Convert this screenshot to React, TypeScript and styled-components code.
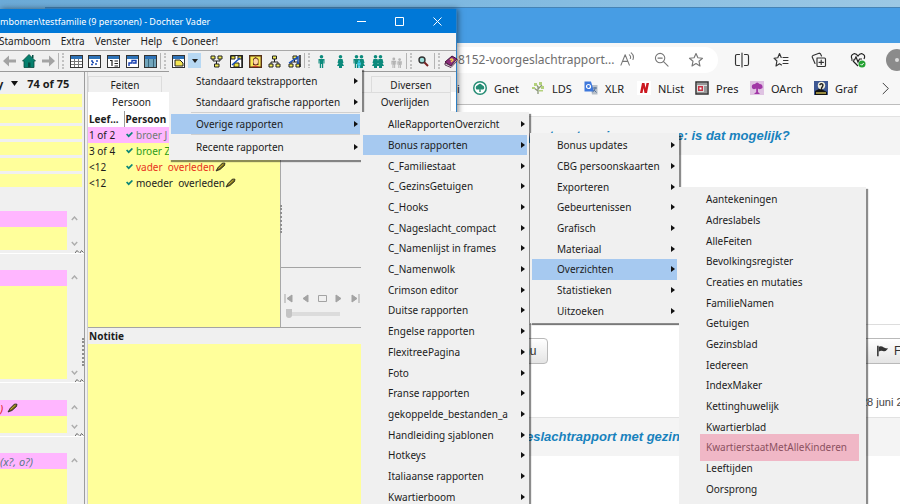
import React from "react";
import styled, { createGlobalStyle, css } from "styled-components";

const UI = `"Noto Sans", "Open Sans", sans-serif`;

const GlobalStyle = createGlobalStyle`
  *, *::before, *::after { box-sizing: border-box; }
  html, body { margin: 0; height: 100%; }
  body { overflow: hidden; font-family: ${UI}; font-size: 10px; color: #1c1c1c; }
  button, input { font: inherit; color: inherit; border: 0; padding: 0; margin: 0; background: none; }
  ul { list-style: none; margin: 0; padding: 0; }
  h2 { margin: 0; }
  a { color: inherit; text-decoration: none; }
  svg { display: block; flex: none; }
`;

const Desktop = styled.main`
  position: relative;
  height: 100vh;
  overflow: hidden;
  background: linear-gradient(90deg, #6cabd8, #7db8e0 50%, #9cc8e4);
`;

/* ---------- browser ---------- */

const Browser = styled.section`
  position: absolute;
  inset: 7px 0 0 45px;
  display: flex;
  flex-direction: column;
  background: #fff;
  border-top: 1px solid #4583b5;
`;

const TabStrip = styled.div`
  flex: none;
  height: 35px;
  background: #479de4;
`;

const BrowserBar = styled.div`
  flex: none;
  display: flex;
  align-items: center;
  height: 33px;
  background: #f7f7f7;
  padding-left: 403px;
  color: #333;
`;

const AddressBox = styled.div`
  display: flex;
  flex: none;
  align-items: center;
  width: 270px;
  height: 26px;
  padding-left: 10px;
  border-radius: 0 13px 13px 0;
  background: #fff;
`;

const AddressInput = styled.input`
  width: 158px;
  font-size: 12px;
  color: #6e6e6e;
  outline: 0;
`;

const IconButton = styled.button<{ $w?: number }>`
  display: flex;
  flex: none;
  justify-content: center;
  align-items: center;
  width: ${(p) => p.$w ?? 38}px;
  height: 26px;
`;

const Bookmarks = styled.nav`
  flex: none;
  display: flex;
  align-items: center;
  height: 29px;
  padding: 0 0 4px 412px;
  background: #f7f7f7;
  border-bottom: 1px solid #bdbdbd;
  font-size: 11px;
  color: #222;
`;

const Bookmark = styled.a<{ $w: number }>`
  display: flex;
  flex: none;
  align-items: center;
  gap: 7px;
  width: ${(p) => p.$w}px;
  white-space: nowrap;
`;

const Page = styled.div`
  flex: 1;
  display: flex;
  flex-direction: column;
  padding-top: 11px;
  font-family: "Liberation Sans", sans-serif;
`;

const PostHead = styled.header<{ $left: number }>`
  height: 39px;
  padding: 11px 0 0 ${(p) => p.$left}px;
  background: #f4f4f4;
  border-top: 1px solid #e2e2e2;
`;

const PostTitle = styled.h2`
  font: italic bold 13px/15px "Liberation Sans", sans-serif;
  color: #1882bd;
  white-space: nowrap;
`;

const PostBody = styled.div`
  height: 170px;
  border-bottom: 1px solid #ddd;
`;

const PostActions = styled.div`
  display: flex;
  justify-content: space-between;
  padding: 13px 0 0 422px;
`;

const PageButton = styled.button`
  display: flex;
  align-items: center;
  justify-content: flex-end;
  gap: 8px;
  height: 26px;
  padding: 0 11px;
  border: 1px solid #b9b9b9;
  border-radius: 4px;
  background: linear-gradient(#fff, #e4e4e4);
  font-size: 12px;
  color: #333;
  white-space: nowrap;
`;

const FlagButton = styled(PageButton)`
  justify-content: flex-start;
  gap: 5px;
  width: 41px;
  padding: 0 0 0 17px;
  border-right: 0;
  border-radius: 0;
`;

const PostDate = styled.time`
  align-self: flex-end;
  width: 39px;
  padding: 32px 0 8px;
  font-size: 11px;
  line-height: 13px;
  color: #444;
  white-space: nowrap;
`;

/* ---------- genealogy program ---------- */

const Program = styled.section`
  position: absolute;
  inset: 9px auto 0 0;
  width: 457px;
  display: flex;
  flex-direction: column;
  background: #f0f0f0;
  border-right: 1px solid #2c7fc4;
  box-shadow: 1px 0 6px rgba(0, 0, 0, 0.5);
`;

const TitleBar = styled.header`
  flex: none;
  display: flex;
  align-items: center;
  height: 24px;
  background: #0078d7;
  color: #fff;
  font-size: 9px;
  white-space: pre;
`;

const WindowButtons = styled.div`
  display: flex;
  margin-left: auto;
`;

const MenuBar = styled.nav`
  flex: none;
  display: flex;
  gap: 10px;
  height: 17px;
  margin-left: -1px;
  line-height: 17px;
  background: #f4f4f4;
`;

const BarButton = styled.button`
  white-space: nowrap;
`;

const ToolBar = styled.div`
  flex: none;
  display: flex;
  align-items: center;
  height: 22px;
  border-top: 1px solid #a8a8a8;
  border-bottom: 1px solid #9a9a9a;
`;

const ToolGroup = styled.div<{ $w: number; $inset?: number }>`
  display: flex;
  flex: none;
  justify-content: space-around;
  width: ${(p) => p.$w}px;
  padding-left: ${(p) => p.$inset ?? 0}px;
`;

const Tool = styled.button<{ $on?: boolean }>`
  display: flex;
  align-items: center;
  justify-content: center;
  width: ${(p) => (p.$on ? 13 : 16)}px;
  height: 17px;
  background: ${(p) => (p.$on ? "#b7d8f3" : "none")};
`;

const Grip = styled.span`
  flex: none;
  width: 6px;
  height: 16px;
  border-left: 1px solid #b4b4b4;
  border-right: 2px dotted #c2c2c2;
`;

const Body = styled.div`
  flex: 1;
  min-height: 0;
  display: grid;
  grid-template-columns: 85px 1fr;
`;

const SidePanel = styled.aside`
  position: relative;
  display: flex;
  flex-direction: column;
  overflow: hidden;
  border-right: 1px solid #9c9c9c;
`;

const Counter = styled.div`
  flex: none;
  display: flex;
  align-items: center;
  gap: 8px;
  height: 22px;
  margin-left: -3px;
  font-size: 11px;
  font-weight: bold;
`;

const FieldList = styled.ul`
  flex: none;
  display: flex;
  flex-direction: column;
  gap: 3px;
  padding-right: 2px;
`;

const Field = styled.li`
  height: 13px;
  background: #ffff9b;
`;

const Box = styled.div<{ $h: number; $top: number }>`
  flex: none;
  display: grid;
  grid-template-columns: 67px 1fr;
  height: ${(p) => p.$h}px;
  margin-top: ${(p) => p.$top}px;
`;

const BoxText = styled.div`
  background: #ffff9b;
`;

const BoxHead = styled.div<{ $color?: string }>`
  display: flex;
  align-items: center;
  gap: 4px;
  height: 16px;
  background: #ffb6ff;
  color: ${(p) => p.$color ?? "#222"};
  font-size: 11px;
  font-style: italic;
`;

const Scroller = styled.div`
  display: flex;
  flex-direction: column;
  justify-content: space-between;
  align-items: center;
  padding: 5px 3px 4px 0;
`;

const SashRow = styled.div`
  flex: none;
  display: flex;
  justify-content: flex-end;
  height: 4px;
  border-bottom: 1px solid #fff;
`;

const SideSash = styled.div`
  position: absolute;
  right: 0;
  top: 266px;
  height: 28px;
  border-right: 2px dotted #8e8e8e;
`;

const MainPanel = styled.div`
  display: flex;
  flex-direction: column;
  margin-left: 2px;
  border-left: 1px solid #cfcfcf;
`;

const TabRow = styled.div<{ $active?: boolean }>`
  flex: none;
  display: flex;
  justify-content: space-between;
  height: ${(p) => (p.$active ? 19 : 20)}px;
  padding: ${(p) => (p.$active ? 0 : 4)}px 5px 0 0;
  background: ${(p) => (p.$active ? "#fff" : "#f0f0f0")};
`;

const Tab = styled.button<{ $w: number; $active?: boolean }>`
  width: ${(p) => p.$w}px;
  border: 1px solid #dcdcdc;
  border-bottom: 0;
  background: ${(p) => (p.$active ? "#fff" : "#f0f0f0")};
  ${(p) => p.$active && css`border-color: #fff;`}
`;

const Upper = styled.div`
  flex: none;
  display: grid;
  grid-template-columns: 193px 1fr;
  height: 217px;
  border-bottom: 1px solid #a4a4a4;
`;

const ListPane = styled.div`
  background: #ffff9b;
  border-right: 1px solid #a8a8a8;
`;

const People = styled.table`
  width: 100%;
  border-collapse: collapse;
  table-layout: fixed;
  line-height: 16px;
  white-space: pre;
  th { background: #fff; text-align: left; font-weight: bold; padding: 0 0 0 1px; height: 16px; }
  th + th { border-left: 1px solid #999; }
  td { padding: 0 0 0 1px; height: 16px; }
`;

const PersonRow = styled.tr<{ $picked?: boolean; $color: string }>`
  background: ${(p) => (p.$picked ? "#ffb6ff" : "#ffff9b")};
  td + td { color: ${(p) => p.$color}; }
`;

const PersonName = styled.span`
  display: flex;
  align-items: center;
  padding-left: 1px;
`;

const NameText = styled.span`
  padding-left: 3px;
`;

const MediaPane = styled.div`
  display: flex;
  flex-direction: column;
`;

const MediaView = styled.div`
  position: relative;
  height: 157px;
  border-bottom: 1px solid #a4a4a4;
`;

const PaneSash = styled.div`
  position: absolute;
  left: -1px;
  bottom: 34px;
  height: 28px;
  border-left: 2px dotted #8e8e8e;
`;

const MediaButtons = styled.div`
  display: flex;
  justify-content: space-between;
  width: 76px;
  margin: 26px 0 0 3px;
`;

const Slider = styled.input`
  appearance: none;
  width: 54px;
  height: 10px;
  margin: 6px 0 0 5px;
  &::-webkit-slider-runnable-track { height: 4px; background: #dcdcdc; }
  &::-webkit-slider-thumb {
    appearance: none;
    width: 6px;
    height: 9px;
    margin-top: -3px;
    background: #c4c4c4;
    border-radius: 0 0 3px 3px;
  }
`;

const NoteLabel = styled.label`
  flex: none;
  height: 16px;
  line-height: 16px;
  padding-left: 1px;
  font-weight: bold;
`;

const Note = styled.textarea`
  flex: 1;
  display: block;
  width: 100%;
  border: 0;
  padding: 2px;
  resize: none;
  outline: 0;
  background: #ffff9b;
`;

/* ---------- popup menus ---------- */

const Popup = styled.div<{ $x: number; $y: number; $w: number }>`
  position: absolute;
  left: ${(p) => p.$x}px;
  top: ${(p) => p.$y}px;
  width: ${(p) => p.$w}px;
  padding: 2px;
  background: #f0f0f0;
  box-shadow: 2px 2px 1px rgba(0, 0, 0, 0.45);
`;

const TallPopup = styled(Popup)`
  bottom: 0;
`;

const PopupList = styled.ul<{ $h: number; $rows?: string }>`
  display: grid;
  grid-auto-rows: 1fr;
  grid-template-rows: ${(p) => p.$rows ?? "none"};
  height: ${(p) => p.$h}px;
`;

const PopupItem = styled.li<{ $marked?: boolean; $ruled?: boolean }>`
  position: relative;
  min-height: 0;
  ${(p) => p.$ruled && css`
    margin-top: 2px;
    &::before {
      content: "";
      position: absolute;
      inset: -2px 0 auto 20px;
      border-top: 1px solid #d0d0d0;
    }
  `}
  ${(p) => p.$marked && css`
    &::after {
      content: "";
      position: absolute;
      inset: -3px 5px -3px 19px;
      background: rgba(240, 125, 155, 0.5);
      pointer-events: none;
    }
  `}
`;

const PopupButton = styled.button<{ $on?: boolean }>`
  display: flex;
  align-items: center;
  justify-content: space-between;
  width: 100%;
  height: 100%;
  padding: 0 2px 0 25px;
  background: ${(p) => (p.$on ? "#a6c9f0" : "transparent")};
  white-space: nowrap;
`;

/* ---------- drawings ---------- */

const Arrow = () => (
  <svg width="4" height="6" viewBox="0 0 4 6"><path d="M0 0 4 3 0 6Z" fill="#111" /></svg>
);
const Check = () => (
  <svg width="7" height="7" viewBox="0 0 7 7"><path d="M.6 2 2.700 4.200 6.400 .5" fill="none" stroke="#0b8578" strokeWidth="1.700" /></svg>
);
const Pen = () => (
  <svg width="11" height="10" viewBox="0 0 11 10">
    <path d="M1 9 3 5.500 7.500 1 10 1.200 9.500 3.500 5 7.500Z" fill="#6e6115" stroke="#222" strokeWidth=".8" />
    <path d="M3.500 6.500 8.500 2" stroke="#cdb73c" strokeWidth="1" />
  </svg>
);
const Chevron = ({ down = false }: { down?: boolean }) => (
  <svg width="7" height="5" viewBox="0 0 7 5"><path d={down ? "M.8 1 3.500 4 6.200 1" : "M.8 4 3.500 1 6.200 4"} fill="none" stroke="#adadad" strokeWidth="1.400" /></svg>
);
const SashMark = () => (
  <svg width="9" height="3" viewBox="0 0 9 3"><path d="M0 3 2 .5 4 2.500M5 3 6.500 .5 8.500 2.500" fill="none" stroke="#666" /></svg>
);
const NavArrow = ({ flip = false }: { flip?: boolean }) => (
  <svg width="13" height="12" viewBox="0 0 13 12"><path d={flip ? "M13 6 7 .5V4.500H0V7.500H7V11.500Z" : "M0 6 6 .5V4.500H13V7.500H6V11.500Z"} fill="#a3a3a3" /></svg>
);
const Home = () => (
  <svg width="14" height="14" viewBox="0 0 14 14"><path d="M7 .5 13.500 7H12V13.500H2V7H.5Z" fill="#06806e" stroke="#064b40" strokeWidth=".8" /><path d="M6 8.500H8.500V13H6ZM10 1H11.500V4H10Z" fill="#054f43" /></svg>
);

const GridFrame = ({ children }: { children?: React.ReactNode }) => (
  <svg width="13" height="13" viewBox="0 0 13 13">
    <rect x=".5" y=".5" width="12" height="12" fill="#fff" stroke="#333" />
    <rect x="1" y="1" width="11" height="3" fill="#2e73b8" />
    {children}
  </svg>
);

const windowDrawings = [
  <path d="M1 6.500H12M1 9.500H12M4.500 4V12M8.500 4V12" stroke="#777" />,
  <path d="M3 6H5M8 6H10M4 7.500H6M7 9H9M3 9.500H5" stroke="#2452b4" strokeWidth="1.500" />,
  <path d="M3 5.500H5V11M7.500 6H11M7.500 8.500H11M7.500 11H11" fill="none" stroke="#222" strokeWidth="1.200" />,
  <path d="M3 11V8H6V5.500H10V8H7" fill="none" stroke="#153eb0" strokeWidth="1.400" />,
  <><rect x="1" y="4" width="11" height="8" fill="#72a5bb" /><path d="M4.500 4V12M9.500 4V12" stroke="#38657a" /></>,
];

const treeDrawings = [
  <><path d="M3 3V6H10V3M6.500 6V10" fill="none" stroke="#222" /><path d="M1 1H5V4H1ZM8 1H12V4H8ZM4.500 9H9V12H4.500Z" fill="#f5ef58" stroke="#222" /></>,
  <><path d="M.5 .5H12.500V12.500H.5Z" fill="#fff" stroke="#222" /><path d="M1 1H5V4H1ZM8 1H12V4H8ZM4 8H9V12H4Z" fill="#eee440" stroke="#222" /><path d="M2 10 10 3" stroke="#1750bd" strokeWidth="1.500" /><path d="M12 0V13" stroke="#222" strokeWidth="1.500" /></>,
  <><path d="M.7 .7H12.300V12.300H.7Z" fill="#f8e955" stroke="#553018" strokeWidth="1.400" /><path d="M4 10V4L6.500 2 9.500 4V10Z" fill="#5c2a18" /><ellipse cx="6.700" cy="6.500" rx="2.300" ry="3" fill="#ffd4a6" /><path d="M3 12Q6.500 8.500 10 12Z" fill="#c64634" /></>,
  <><path d="M6.500 3V7M3 10V7H10V10" fill="none" stroke="#222" /><path d="M4.500 1H8.500V4H4.500ZM1 9H5V12H1ZM8 9H12V12H8Z" fill="#f5ef58" stroke="#222" /></>,
  <><path d="M6.500 1V7M3 10V7H10V10" fill="none" stroke="#222" /><path d="M5 1H9V4H5ZM1 9H5V12H1ZM8 9H12V12H8Z" fill="#f5ef58" stroke="#222" /><path d="M1 8 10 2V9" fill="none" stroke="#1750bd" strokeWidth="1.500" /><path d="M12 0V12" stroke="#222" strokeWidth="1.500" /></>,
];

const Person = ({ x = 0, skirt = false, color = "#0c8a7c", s = 1 }: { x?: number; skirt?: boolean; color?: string; s?: number }) => (
  <g transform={`translate(${x} ${(1 - s) * 13}) scale(${s})`} fill={color}>
    <circle cx="3.500" cy="1.800" r="1.800" />
    <path d={skirt ? "M1.500 4H5.500L6.500 8H5.500L7 11H5V13H2V11H0L1.500 8H.5Z" : "M.5 4H6.500V8.500H5.500V5.500H5.200V13H3.900V9H3.100V13H1.800V5.500H1.500V8.500H.5Z"} />
  </g>
);

const peopleDrawings = [
  <svg width="7" height="13"><Person /></svg>,
  <svg width="7" height="13"><Person skirt /></svg>,
  <svg width="12" height="13"><Person /><Person x={5} skirt /><Person x={4} s={0.6} color="#3ecbea" /></svg>,
  <svg width="12" height="13"><Person skirt /><Person x={5} skirt /></svg>,
  <svg width="12" height="13"><Person s={0.8} color="#b4b4b4" /><Person x={6} s={0.75} color="#b4b4b4" /></svg>,
];

const Stroke = ({ d, w = 16, color = "#333" }: { d: string; w?: number; color?: string }) => (
  <svg width={w} height={w} viewBox="0 0 16 16"><path d={d} fill="none" stroke={color} strokeWidth="1.150" strokeLinecap="round" strokeLinejoin="round" /></svg>
);

const star = "M8 1.500 9.900 5.800 14.500 6.200 11 9.300 12 14 8 11.600 4 14 5 9.300 1.500 6.200 6.100 5.800Z";

const bookmarks = [
  { text: "Gnet", w: 58, icon: <><circle cx="7" cy="7" r="7" fill="#258c74" /><circle cx="7" cy="7" r="5.500" fill="#fff" /><path d="M3 8Q2 5 5 4 7 1.500 9 4 12 5 11 8 9 9 7.700 8.200V11H6.300V8.200Q4 9 3 8" fill="#258c74" /></> },
  { text: "LDS", w: 53, icon: <><path d="M7 13V5M7 10 3 7M7 8 11 4M7 6 5 3" stroke="#8b9878" strokeWidth="1.300" /><path d="M1 6H4V8H1ZM3 2H6V5H3ZM8 1H11V4H8ZM10 5H13V8H10ZM8 9H12V10.500H8Z" fill="#b3d17c" /></> },
  { text: "XLR", w: 53, icon: <><path d="M6 4H13.500V13.500H8Z" fill="#b8bfc8" /><path d="M.5 .5H7L10 10.500H.5Z" fill="#3e78dc" /><circle cx="4.500" cy="5.500" r="2" fill="none" stroke="#fff" strokeWidth="1.200" /><path d="M9 7H13M11 6V8Q10 10 8.500 11M10 9 12.500 11.500" stroke="#55729a" fill="none" /></> },
  { text: "NList", w: 58, icon: <><rect width="14" height="14" fill="#fff" /><path d="M3 12 5 2H7.500L8.500 7 9.500 2H12L10 12H7.500L6.500 7 5.500 12Z" fill="#cc1820" /></> },
  { text: "Pres", w: 55, icon: <><path d="M1 1H13V13H1Z" fill="#ddd" stroke="#333" strokeWidth="1.500" /><path d="M2 3H12M9 6H12M9 8H12M9 10H12M2 12H12" stroke="#555" /><rect x="3" y="5" width="5" height="5" fill="#c93444" /><rect x="4.500" y="6.500" width="2" height="2" fill="#fff" /></> },
  { text: "OArch", w: 64, icon: <><rect width="14" height="14" fill="#dfc3e2" /><path d="M2 7Q1 3 5 3 7 0 9.500 3 13 3 12.500 7 10 9 8 7.500V11L10 13H4L6.200 11V7.500Q3 9 2 7" fill="#a137a6" /></> },
  { text: "Graf", w: 59, icon: <><rect width="14" height="14" fill="#3d5793" /><path d="M1 14V10L5 8 9 9 13 11V14Z" fill="#111" /><circle cx="7.500" cy="4.500" r="3.700" fill="#f0eedd" /><path d="M5.500 4Q8 1.500 9 4 8.500 6 7.500 7V9" fill="none" stroke="#222" strokeWidth="1.400" /><path d="M2 12H12" stroke="#c7b653" strokeWidth="1.500" /></> },
];

/* ---------- menus ---------- */

type Entry = { text: string; ruled?: boolean; marked?: boolean };

const Entries = ({ items, open, height, rows, arrows = true }: { items: Entry[]; open?: string; height: number; rows?: string; arrows?: boolean }) => (
  <PopupList $h={height} $rows={rows} role="menu">
    {items.map((it) => (
      <PopupItem key={it.text} $ruled={it.ruled} $marked={it.marked} role="none">
        <PopupButton role="menuitem" $on={it.text === open}>
          {it.text}
          {arrows && <Arrow />}
        </PopupButton>
      </PopupItem>
    ))}
  </PopupList>
);

const list = (s: string): Entry[] => s.split("|").map((text) => ({ text }));

const reportMenu: Entry[] = [
  { text: "Standaard tekstrapporten" },
  { text: "Standaard grafische rapporten" },
  { text: "Overige rapporten", ruled: true },
  { text: "Recente rapporten", ruled: true },
];
const otherMenu = list("AlleRapportenOverzicht|Bonus rapporten|C_Familiestaat|C_GezinsGetuigen|C_Hooks|C_Nageslacht_compact|C_Namenlijst in frames|C_Namenwolk|Crimson editor|Duitse rapporten|Engelse rapporten|FlexitreePagina|Foto|Franse rapporten|gekoppelde_bestanden_a|Handleiding sjablonen|Hotkeys|Italiaanse rapporten|Kwartierboom");
const bonusMenu = list("Bonus updates|CBG persoonskaarten|Exporteren|Gebeurtenissen|Grafisch|Materiaal|Overzichten|Statistieken|Uitzoeken");
const overviewMenu = list("Aantekeningen|Adreslabels|AlleFeiten|Bevolkingsregister|Creaties en mutaties|FamilieNamen|Getuigen|Gezinsblad|Iedereen|IndexMaker|Kettinghuwelijk|Kwartierblad|KwartierstaatMetAlleKinderen|Leeftijden|Oorsprong").map((e) => ({ ...e, marked: e.text.startsWith("Kwartierstaat") }));

const people = [
  { age: "1 of 2", name: "broer J", color: "#6f7d74", picked: true },
  { age: "3 of 4", name: "broer Z", color: "#2d9c1c" },
  { age: "<12", name: "vader  overleden", color: "#e8321c", pen: true },
  { age: "<12", name: "moeder  overleden", color: "#222", pen: true },
];

const SideBox = ({ h, top, head, color, pen, last }: { h: number; top: number; head?: string; color?: string; pen?: boolean; last?: boolean }) => (
  <>
    <Box $h={h} $top={top}>
      <BoxText><BoxHead $color={color}>{head}{pen && <Pen />}</BoxHead></BoxText>
      <Scroller><Chevron />{!last && <Chevron down />}</Scroller>
    </Box>
    {!last && <SashRow><SashMark /></SashRow>}
  </>
);

export default function App() {
  return (
    <Desktop>
      <GlobalStyle />
      <Browser>
        <TabStrip />
        <BrowserBar>
          <AddressBox>
            <AddressInput aria-label="Adres" defaultValue="8152-voorgeslachtrapport..." />
            <IconButton $w={22} aria-label="Voorlezen"><Stroke w={15} color="#777" d="M1 14 5.500 3 10 14M2.500 10H8.500M10 3Q12 4.500 11 7M12 1Q15.500 4 13.800 8" /></IconButton>
            <IconButton $w={46} aria-label="Uitzoomen"><Stroke w={15} color="#777" d="M11.500 6.500A5 5 0 1 1 1.500 6.500 5 5 0 0 1 11.500 6.500M10.200 10.200 15 15M4.200 6.500H8.800" /></IconButton>
            <IconButton $w={24} aria-label="Favoriet"><Stroke color="#777" d={star} /></IconButton>
          </AddressBox>
          <IconButton $w={48} aria-label="Gesplitst scherm"><Stroke d="M5.500 2.500H3Q1.500 2.500 1.500 4V12Q1.500 13.500 3 13.500H5.500M8 1V15M10.500 2.500H13Q14.500 2.500 14.500 4V12Q14.500 13.500 13 13.500H10.500" /></IconButton>
          <IconButton $w={30} aria-label="Favorieten"><Stroke d="M10 5.500H15M10.500 8.500H15M10 11.500H15M8.200 5.500 6.500 1.500 4.800 5.800 1 6.200 3.900 9 3 14 6.500 11.800 8.500 13" /></IconButton>
          <IconButton $w={46} aria-label="Verzamelingen"><Stroke d="M6 6H13.500Q14.500 6 14.500 7V13.500Q14.500 14.500 13.500 14.500H7Q6 14.500 6 13.500ZM10.200 8V12.500M8 10.300H12.500M4 11.500 1.200 5Q1 4 2 3.500L8 1.200Q9.500 1 10.500 4" /></IconButton>
          <IconButton $w={32} aria-label="Browseressentials">
            <svg width="16" height="16" viewBox="0 0 16 16"><path d="M2 7Q0 3 4 1.700 6.500 1.500 8 4 9.500 1.500 12 1.700 16 3 14 7M3 9 8 14M1 8H4.500L6 5 8 10 9.500 7H12" fill="none" stroke="#222" strokeWidth="1.200" /><circle cx="12" cy="12" r="3.500" fill="#25a233" /><path d="M10.500 12 11.700 13.200 13.700 11" fill="none" stroke="#fff" /></svg>
          </IconButton>
          <IconButton $w={46} aria-label="Profiel"><svg width="22" height="22"><circle cx="11" cy="11" r="11" fill="#8b8b8b" /><circle cx="11" cy="11" r="2" fill="#ddd" /></svg></IconButton>
        </BrowserBar>
        <Bookmarks aria-label="Favorietenbalk">
          <Bookmark href="#" $w={16}>i</Bookmark>
          {bookmarks.map((b) => (
            <Bookmark key={b.text} href="#" $w={b.w}>
              <svg width="14" height="14" viewBox="0 0 14 14">{b.icon}</svg>{b.text}
            </Bookmark>
          ))}
          <IconButton $w={24} aria-label="Meer"><Stroke w={13} d="M5 1.500 11.500 8 5 14.500" /></IconButton>
        </Bookmarks>
        <Page>
          <PostHead $left={468}><PostTitle>apport met gezinsweergave: is dat mogelijk?</PostTitle></PostHead>
          <PostBody />
          <PostActions>
            <PageButton>Bedank nu</PageButton>
            <FlagButton aria-label="Rapporteer">
              <svg width="12" height="12" viewBox="0 0 14 12"><path d="M1 0V12" stroke="#333" strokeWidth="1.800" /><path d="M2 1Q5-.5 8 2 10 3 13 3 10 7 7 6 4 5 2 7Z" fill="#333" /></svg>F
            </FlagButton>
          </PostActions>
          <PostDate>28 juni 2</PostDate>
          <PostHead $left={481}><PostTitle>eslachtrapport met gezinsweergave</PostTitle></PostHead>
        </Page>
      </Browser>

      <Program>
        <TitleBar>
          mbomen\testfamilie (9 personen) - Dochter Vader
          <WindowButtons>
            <IconButton aria-label="Minimaliseren"><svg width="9" height="9"><path d="M0 4.500H9" stroke="#fff" /></svg></IconButton>
            <IconButton aria-label="Maximaliseren"><svg width="9" height="9"><path d="M.5 .5H8.500V8.500H.5Z" fill="none" stroke="#fff" /></svg></IconButton>
            <IconButton aria-label="Sluiten"><svg width="9" height="9"><path d="M.5 .5 8.500 8.500M8.500 .5 .5 8.500" stroke="#fff" /></svg></IconButton>
          </WindowButtons>
        </TitleBar>
        <MenuBar>
          {["Stamboom", "Extra", "Venster", "Help", "€ Doneer!"].map((t) => <BarButton key={t}>{t}</BarButton>)}
        </MenuBar>
        <ToolBar>
          <ToolGroup $w={58}>
            <Tool aria-label="Vorige"><NavArrow /></Tool>
            <Tool aria-label="Start"><Home /></Tool>
            <Tool aria-label="Volgende"><NavArrow flip /></Tool>
          </ToolGroup>
          <Grip />
          <ToolGroup $w={96} $inset={3}>
            {windowDrawings.map((d, i) => <Tool key={i} aria-label={`Venster ${i + 1}`}><GridFrame>{d}</GridFrame></Tool>)}
          </ToolGroup>
          <Grip />
          <ToolGroup $w={36} $inset={4}>
            <Tool aria-label="Rapporten"><GridFrame><path d="M3 5H8L11 8V11H3Z" fill="#f5e653" stroke="#222" /></GridFrame></Tool>
            <Tool $on aria-label="Rapportmenu"><svg width="6" height="4"><path d="M0 0H6L3 4Z" fill="#222" /></svg></Tool>
          </ToolGroup>
          <ToolGroup $w={102} $inset={5}>
            {treeDrawings.map((d, i) => <Tool key={i} aria-label={`Boom ${i + 1}`}><svg width="13" height="13" viewBox="0 0 13 13">{d}</svg></Tool>)}
          </ToolGroup>
          <Grip />
          <ToolGroup $w={96} $inset={2}>
            {peopleDrawings.map((d, i) => <Tool key={i} aria-label={`Personen ${i + 1}`}>{d}</Tool>)}
          </ToolGroup>
          <Grip />
          <ToolGroup $w={22}>
            <Tool aria-label="Zoeken"><svg width="11" height="11"><circle cx="4" cy="4" r="3" fill="#9de0dc" stroke="#333" strokeWidth="1.400" /><path d="M6.500 6.500 10 10" stroke="#7a2020" strokeWidth="2" /></svg></Tool>
          </ToolGroup>
          <Grip />
          <ToolGroup $w={22}>
            <Tool aria-label="Handleiding"><svg width="14" height="13"><path d="M1 7 8 1 13 4 7 11Z" fill="#8b2c7b" stroke="#411238" /><path d="M1 8V10L7 12.500 13 6V4L7 11Z" fill="#eee" stroke="#411238" strokeWidth=".8" /><path d="M6 5Q8 3 9 5L7 7" fill="none" stroke="#f4d34b" strokeWidth="1.300" /></svg></Tool>
          </ToolGroup>
        </ToolBar>
        <Body>
          <SidePanel>
            <Counter>y<svg width="8" height="5"><path d="M0 0H7L3.500 5Z" fill="#111" /></svg>74 of 75</Counter>
            <FieldList>{[0, 1, 2, 3, 4, 5].map((n) => <Field key={n} />)}</FieldList>
            <SideBox h={39} top={24} />
            <SideBox h={109} top={16} />
            <SideBox h={33} top={17} head=")" color="#e0201c" pen />
            <SideBox h={60} top={16} head="(x?, o?)" color="#5b7a88" last />
            <SideSash />
          </SidePanel>
          <MainPanel>
            <TabRow><Tab $w={74}>Feiten</Tab><Tab $w={80}>Diversen</Tab></TabRow>
            <TabRow $active><Tab $w={87} $active>Persoon</Tab><Tab $w={92}>Overlijden</Tab></TabRow>
            <Upper>
              <ListPane>
                <People>
                  <colgroup><col width="36" /><col /></colgroup>
                  <thead><tr><th>Leef...</th><th>Persoon</th></tr></thead>
                  <tbody>
                    {people.map((p) => (
                      <PersonRow key={p.name} $picked={p.picked} $color={p.color}>
                        <td>{p.age}</td>
                        <td><PersonName><Check /><NameText>{p.name}</NameText>{p.pen && <Pen />}</PersonName></td>
                      </PersonRow>
                    ))}
                  </tbody>
                </People>
              </ListPane>
              <MediaPane>
                <MediaView><PaneSash /></MediaView>
                <MediaButtons>
                  {["M1 0V9M8 1V8L3 4.500Z", "M7 1V8L2 4.500Z", "", "M2 1V8L7 4.500Z", "M8 0V9M1 1V8L6 4.500Z"].map((d, i) => (
                    <button key={i} aria-label={`Media ${i + 1}`}>
                      <svg width="9" height="9">{d ? <path d={d} fill="#a3a3a3" stroke="#a3a3a3" /> : <path d="M.5 1.500H8.500V7.500H.5Z" fill="none" stroke="#a3a3a3" />}</svg>
                    </button>
                  ))}
                </MediaButtons>
                <Slider type="range" defaultValue={0} aria-label="Positie" />
              </MediaPane>
            </Upper>
            <NoteLabel htmlFor="note">Notitie</NoteLabel>
            <Note id="note" />
          </MainPanel>
        </Body>
      </Program>

      <Popup $x={169} $y={68} $w={193}><Entries items={reportMenu} open="Overige rapporten" height={88} rows="21px 21px 22px 24px" /></Popup>
      <TallPopup $x={361} $y={112} $w={168}><Entries items={otherMenu} open="Bonus rapporten" height={393} /></TallPopup>
      <Popup $x={530} $y={133} $w={149}><Entries items={bonusMenu} open="Overzichten" height={186} /></Popup>
      <TallPopup $x={679} $y={187} $w={187}><Entries items={overviewMenu} height={310} arrows={false} /></TallPopup>
    </Desktop>
  );
}
